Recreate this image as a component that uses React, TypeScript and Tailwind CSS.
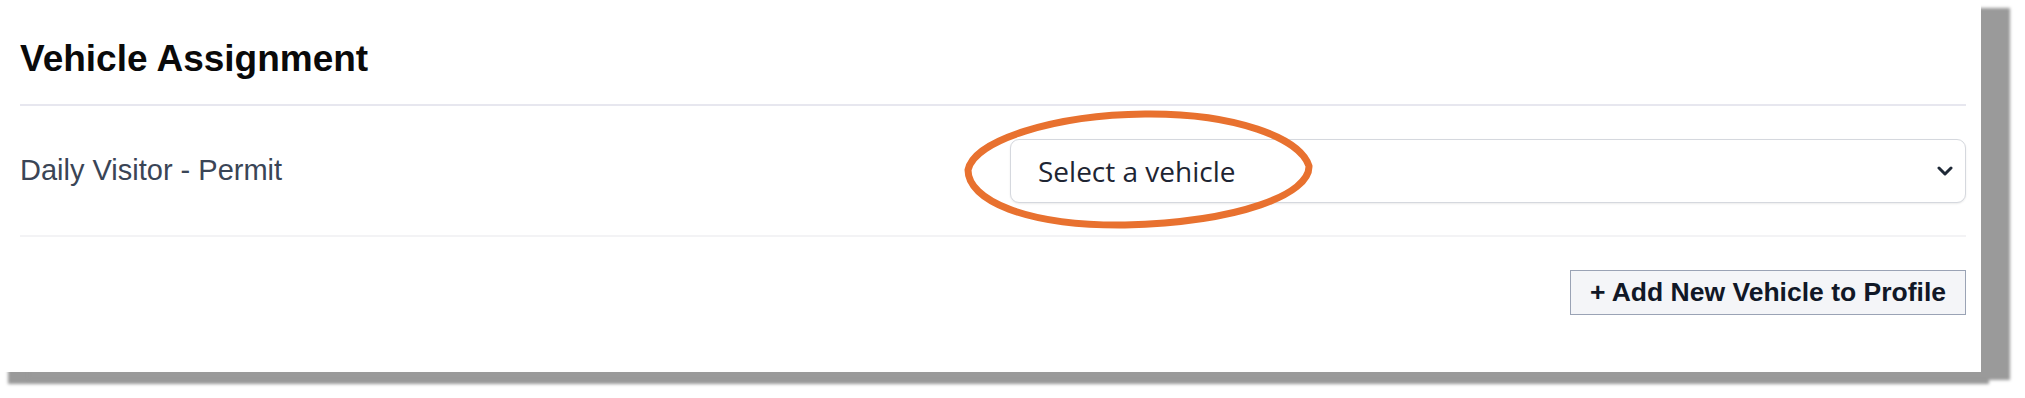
function App() {
  return (
    <div className="w-[2025px] h-[398px] bg-white overflow-hidden">
      <div className="relative w-[1981px] h-[372px] bg-white pl-[20px] pr-[15px] shadow-[29px_8px_3px_#9a9a9a,8px_12px_3px_#9a9a9a]">
        <div className="pt-[40px] pb-[27px] border-b-2 border-[#e7e7ef]">
          <h2 className="font-['Liberation_Sans',Arial,sans-serif] font-bold text-[37px] leading-none text-[#0a0a0a]">
            Vehicle Assignment
          </h2>
        </div>

        <div className="flex items-center h-[131px] border-b-2 border-[#f3f3f5]">
          <div className="w-[990px] font-['Liberation_Sans',Arial,sans-serif] text-[29px] leading-none text-[#3a4556]">
            Daily Visitor - Permit
          </div>
          <div className="flex-1 flex items-center justify-between h-[64px] pl-[27px] pr-[12px] bg-white border border-[#d5d8de] rounded-[9px] shadow-[0_1px_2px_rgba(0,0,0,0.08)]">
            <span className="font-['Open_Sans',sans-serif] text-[28px] leading-none text-[#1e2533]">
              Select a vehicle
            </span>
            <svg className="w-[16px] h-[10px]" viewBox="0 0 16 10" fill="none">
              <polyline
                points="2,2 8,8 14,2"
                stroke="#1f2937"
                strokeWidth="3"
                strokeLinecap="round"
                strokeLinejoin="round"
              />
            </svg>
          </div>
        </div>

        <div className="flex justify-end pt-[33px]">
          <button className="h-[45px] px-[19px] bg-[#f4f5f8] border border-[#9aa3b5] font-['Liberation_Sans',Arial,sans-serif] font-bold text-[26.5px] leading-none text-[#111827]">
            + Add New Vehicle to Profile
          </button>
        </div>

        {/* hand-drawn highlight round the select */}
        <svg
          className="absolute left-[960px] top-[108px] w-[360px] h-[124px] pointer-events-none"
          viewBox="0 0 360 124"
          fill="none"
        >
          <path
            d="M 8 62 C 14 32, 95 7, 185 6 C 275 5, 340 30, 349 58 C 350 86, 280 114, 165 117 C 65 118, 8 92, 8 62 Z"
            stroke="#e8712f"
            strokeWidth="7"
          />
        </svg>
      </div>
    </div>
  );
}

export default App;
